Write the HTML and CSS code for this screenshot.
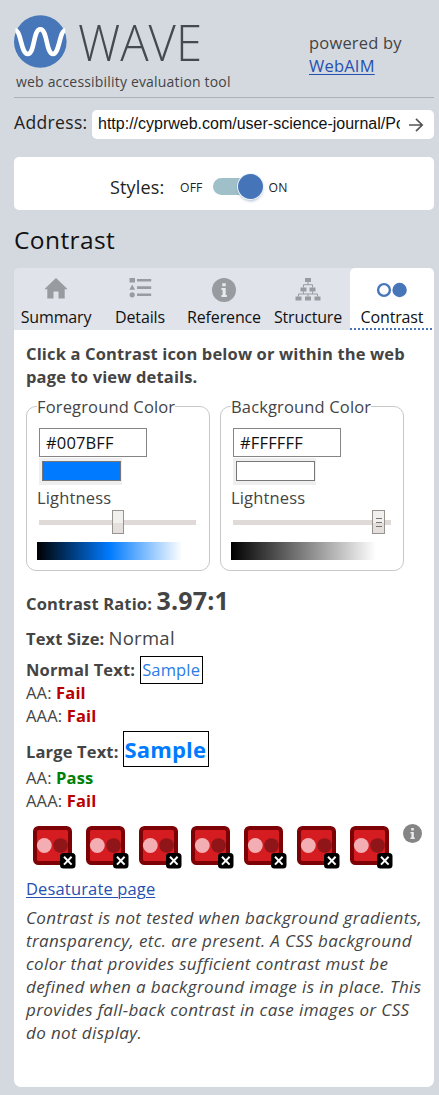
FILE: index.html
```html
<!DOCTYPE html>
<html lang="en">
<head>
<meta charset="utf-8">
<title>WAVE</title>
<link rel="stylesheet" href="styles.css">
</head>
<body>
<svg class="defs" aria-hidden="true">
  <symbol id="contrast-error" viewBox="0 0 43 43">
    <rect x="2" y="2" width="35" height="35" rx="3.5" fill="#d51c20" stroke="#7d0205" stroke-width="4"/>
    <circle cx="27.5" cy="19.5" r="7.3" fill="#901519"/>
    <circle cx="11.3" cy="19.5" r="7.4" fill="#f2aeb2"/>
    <rect x="27" y="27" width="15.5" height="15.5" rx="3.5" fill="#000"/>
    <path d="M31 30.8l7.6 7.8M38.6 30.8L31 38.6" stroke="#fff" stroke-width="2" fill="none"/>
  </symbol>
  <symbol id="info" viewBox="0 0 24 24">
    <circle cx="12" cy="12" r="12"/>
    <path d="M10.3 5.2h3.4v3h-3.4zM9.4 10h4.3v7h1.2v2H9.4v-2h1.2v-5H9.4z" fill="#e8eaed"/>
  </symbol>
</svg>
<header class="header">
  <div class="brand">
    <svg class="logo" width="190" height="54" viewBox="0 0 190 54">
      <circle cx="26.3" cy="26.5" r="26.3" fill="#4877b9"/>
      <path d="M1.5 15.5C7 15.5 7 39 13.7 39C21 39 19 14.2 26.3 14.2C33.5 14.2 32 39 39 39C45.500 39 45.500 15.500 51.200 15.500" fill="none" stroke="#fff" stroke-width="4.600"/>
      <text class="wordmark" x="64" y="46" textLength="124" lengthAdjust="spacingAndGlyphs">WAVE</text>
    </svg>
    <div class="tagline">web accessibility evaluation tool</div>
  </div>
  <div class="powered">powered by<br><a href="#">WebAIM</a></div>
</header>
<div class="address">
  <span class="address-label">Address:</span>
  <div class="address-box">
    <span class="url">http://cyprweb.com/user-science-journal/Portal</span>
    <svg width="16" height="16" viewBox="0 0 16 16"><path d="M1 8h13M8 1.800L14.200 8L8 14.200" fill="none" stroke="#555" stroke-width="1.700"/></svg>
  </div>
</div>
<section class="styles-bar">
  <span class="styles-label">Styles:</span>
  <span class="state">OFF</span>
  <span class="toggle"><span class="knob"></span></span>
  <span class="state">ON</span>
</section>
<h1 class="title">Contrast</h1>
<nav class="tabs">
  <div class="tab"><svg width="36" height="24" viewBox="0 0 36 24"><path d="M18 0L29.700 11.300H26.700V20.500H20.500V13.500H15.500V20.500H9.300V11.300H6.300z"/></svg><span>Summary</span></div>
  <div class="tab"><svg width="36" height="24" viewBox="0 0 36 24"><path d="M7.500 0h5.500v4.500H7.500zM15 0.900h14.200v2.600H15zM15 8.300h14.200v2.600H15zM15 15.500h14.200v2.600H15zM10.200 6.500L13 11.700H7.400z"/><circle cx="10.200" cy="16.800" r="2.600"/></svg><span>Details</span></div>
  <div class="tab"><svg width="24" height="24" viewBox="0 0 24 24"><use href="#info"/></svg><span>Reference</span></div>
  <div class="tab"><svg width="36" height="24" viewBox="0 0 36 24"><path d="M15 0h6v4h-6zM10.500 9.500h6v4h-6zM19.500 9.500h6v4h-6zM5.500 18.500h6v4h-6zM15 18.500h6v4h-6zM24.500 18.500h6v4h-6z"/><path d="M18 4v3M13.500 9.500V6.700H22.500V9.500M13.500 13.500V16M22.500 13.500V16M8.500 18.500V16H27.500V18.500M18 16V18.500" fill="none" stroke="#989b9f" stroke-width="1"/></svg><span>Structure</span></div>
  <div class="tab active"><svg width="36" height="24" viewBox="0 0 36 24"><circle cx="10" cy="12" r="5.900" fill="none" stroke="#4877b9" stroke-width="2.400"/><circle cx="25.600" cy="12" r="7.200" fill="#4877b9"/></svg><span>Contrast</span></div>
</nav>
<main class="panel">
  <p class="intro">Click a Contrast icon below or within the web<br>page to view details.</p>
  <div class="pickers">
    <fieldset class="picker">
      <legend>Foreground Color</legend>
      <div class="hex">#007BFF</div>
      <div class="swatch"><div class="chip blue"></div></div>
      <div class="lightness">Lightness</div>
      <div class="slider"><div class="track fg"></div><div class="thumb mid"></div></div>
      <div class="ramp ramp-blue"></div>
    </fieldset>
    <fieldset class="picker">
      <legend>Background Color</legend>
      <div class="hex">#FFFFFF</div>
      <div class="swatch"><div class="chip"></div></div>
      <div class="lightness">Lightness</div>
      <div class="slider"><div class="track"></div><div class="thumb end"><i></i><i></i><i></i></div></div>
      <div class="ramp ramp-gray"></div>
    </fieldset>
  </div>
  <div class="row ratio"><b>Contrast Ratio: <span class="value">3.97:1</span></b></div>
  <div class="row size"><b>Text Size:</b><span class="normal">Normal</span></div>
  <div class="row normal-row"><b>Normal Text:</b><span class="sample">Sample</span></div>
  <div class="result">AA: <b class="fail">Fail</b></div>
  <div class="result">AAA: <b class="fail">Fail</b></div>
  <div class="row large-row"><b>Large Text:</b><span class="sample large">Sample</span></div>
  <div class="result">AA: <b class="pass">Pass</b></div>
  <div class="result">AAA: <b class="fail">Fail</b></div>
  <div class="icons">
    <svg class="err"><use href="#contrast-error"/></svg>
    <svg class="err"><use href="#contrast-error"/></svg>
    <svg class="err"><use href="#contrast-error"/></svg>
    <svg class="err"><use href="#contrast-error"/></svg>
    <svg class="err"><use href="#contrast-error"/></svg>
    <svg class="err"><use href="#contrast-error"/></svg>
    <svg class="err"><use href="#contrast-error"/></svg>
    <svg class="help" viewBox="0 0 24 24"><use href="#info"/></svg>
  </div>
  <a class="desaturate" href="#">Desaturate page</a>
  <p class="note">Contrast is not tested when background gradients,<br>transparency, etc. are present. A CSS background<br>color that provides sufficient contrast must be<br>defined when a background image is in place. This<br>provides fall-back contrast in case images or CSS<br>do not display.</p>
</main>
</body>
</html>
```
FILE: styles.css
```css
* { box-sizing: border-box; }
body {
  margin: 0;
  width: 439px;
  height: 1095px;
  padding: 0 5px 8px 14px;
  overflow: hidden;
  display: flex;
  flex-direction: column;
  background: #d4d9e0;
  font: 16.5px/23px "Open Sans", sans-serif;
  letter-spacing: .15px;
  color: #444;
}
a { color: #2550b0; text-underline-offset: 2px; text-decoration-thickness: 1px; }
.defs { position: absolute; width: 0; height: 0; }
.header {
  height: 98px;
  flex: none;
  display: flex;
  justify-content: space-between;
  border-bottom: 1px solid #aeb1b4;
}
.brand { padding-top: 15px; width: 230px; }
.logo { display: block; overflow: visible; }
.wordmark { font: 300 49px "Open Sans", sans-serif; letter-spacing: 0; fill: #444a50; }
.tagline { font-size: 14px; letter-spacing: .18px; line-height: 20px; padding: 3px 0 0 2px; white-space: nowrap; }
.powered { padding-top: 31px; width: 125px; letter-spacing: .2px; }
.address { height: 41px; padding-top: 12px; flex: none; display: flex; }
.address-label { width: 78px; color: #222; line-height: 25px; font-size: 17.5px; letter-spacing: .35px; }
.address-box {
  flex: 1;
  height: 29px;
  background: #fff;
  border-radius: 5px;
  display: flex;
  align-items: center;
  padding: 0 10px 0 6px;
}
.url {
  width: 302px;
  margin-right: 8px;
  overflow: hidden;
  white-space: nowrap;
  color: #111;
  font: 16px/22px "Liberation Sans", Arial, sans-serif;
  letter-spacing: 0;
  position: relative;
  top: -1px;
}
.styles-bar {
  height: 53px;
  flex: none;
  margin-top: 18px;
  background: #fff;
  border-radius: 5px;
  display: flex;
  align-items: center;
  padding: 8px 0 0 96px;
  color: #222;
}
.styles-label { width: 70px; font-size: 18px; }
.state { font-size: 12.2px; }
.toggle {
  position: relative;
  width: 46px;
  height: 17px;
  margin: -3px 10px 0 10px;
  background: #9fc0c9;
  border-radius: 9px;
}
.knob {
  position: absolute;
  right: -4px;
  top: -4px;
  width: 25px;
  height: 25px;
  border-radius: 50%;
  background: #4575b8;
  box-shadow: 0 0 0 1px #edf3fb, 0 2px 3px rgba(60, 90, 150, .4);
}
.title {
  margin: 0;
  height: 58px;
  flex: none;
  padding-top: 14px;
  font-weight: 400;
  font-size: 24.5px;
  letter-spacing: .4px;
  line-height: 32px;
  color: #111;
}
.tabs {
  display: grid;
  grid-template-columns: repeat(5, 1fr);
  height: 62px;
  flex: none;
  background: #e0e3e9;
  border-radius: 5px 5px 0 0;
}
.tab {
  display: flex;
  flex-direction: column;
  align-items: center;
  padding-top: 10px;
  color: #111;
  fill: #989b9f;
  font-size: 16px;
  letter-spacing: -.15px;
}
.tab span { padding-top: 4px; }
.tab.active {
  background: repeating-linear-gradient(90deg, #4877b9 0 2px, #fff 2px 4px) left bottom / 100% 2px no-repeat #fff;
  border-radius: 5px 5px 0 0;
}
.panel { flex: 1; background: #fff; border-radius: 0 0 7px 7px; padding: 12px 12px 0; }
.intro { margin: 0; font-weight: 700; white-space: nowrap; }
.pickers { display: flex; gap: 10px; margin-top: 7px; }
.picker {
  width: 184px;
  height: 176px;
  margin: 0;
  padding: 10px 10px 0;
  border: 1px solid #c8c8c8;
  border-radius: 10px;
}
.picker legend { padding: 0; height: 23px; line-height: 24px; white-space: nowrap; }
.hex {
  width: 108px;
  height: 29px;
  margin-left: 2px;
  padding-left: 6px;
  line-height: 28px;
  border: 1px solid #858585;
  color: #111;
}
.swatch { width: 83px; height: 27px; margin: 1px 0 0 2px; padding: 3px 1px 3px 3px; background: #efefef; }
.chip { height: 20px; border: 1px solid #777; background: #fff; }
.chip.blue { background: #007bff; }
.lightness { padding: 1px 0; }
.slider { position: relative; height: 32px; padding-top: 10px; }
.track { width: 158px; height: 5px; margin-left: 2px; background: #dfdad7; }
.track.fg { width: 157px; }
.thumb {
  position: absolute;
  top: 0;
  width: 12px;
  height: 24px;
  border: 1px solid #97938f;
  background: linear-gradient(#f2f0ee 55%, #e4dfdc 55%);
}
.mid { left: 75px; }
.end { left: 141px; width: 13px; display: flex; flex-direction: column; align-items: center; justify-content: center; gap: 3px; }
.end i { width: 6px; height: 1px; background: #777; }
.ramp { width: 145px; height: 18px; }
.ramp-blue { background: linear-gradient(90deg, #000, #007bff 50%, #fff); }
.ramp-gray { background: linear-gradient(90deg, #000, #fff); }
.row { display: flex; align-items: baseline; white-space: pre; }
.ratio { margin-top: 11px; height: 43px; line-height: 36px; }
.value { font-size: 25px; }
.size { height: 31px; line-height: 26px; }
.normal { margin-left: 4px; font-size: 18.5px; letter-spacing: .3px; }
.normal-row { height: 25px; }
.sample { margin-left: 5px; padding: 0 2px 0 1px; border: 1px solid #000; color: #2c7be8; line-height: 26px; }
.sample.large { margin-left: 4px; padding-right: 2px; font-size: 22px; font-weight: 700; color: #007bff; line-height: 34px; }
.large-row { height: 35px; margin-top: 4px; }
.fail { color: #b80000; }
.pass { color: #008000; }
.icons { display: flex; margin: 14px 0 0 7px; height: 51px; }
.err { width: 43px; height: 43px; margin-right: 9.8px; flex: none; }
.help { width: 19px; height: 19px; margin: -2px 0 0 0; flex: none; fill: #858585; }
.desaturate { display: block; }
.note { margin: 6px 0 0; font-size: 17px; letter-spacing: .38px; font-style: italic; white-space: nowrap; }
```
